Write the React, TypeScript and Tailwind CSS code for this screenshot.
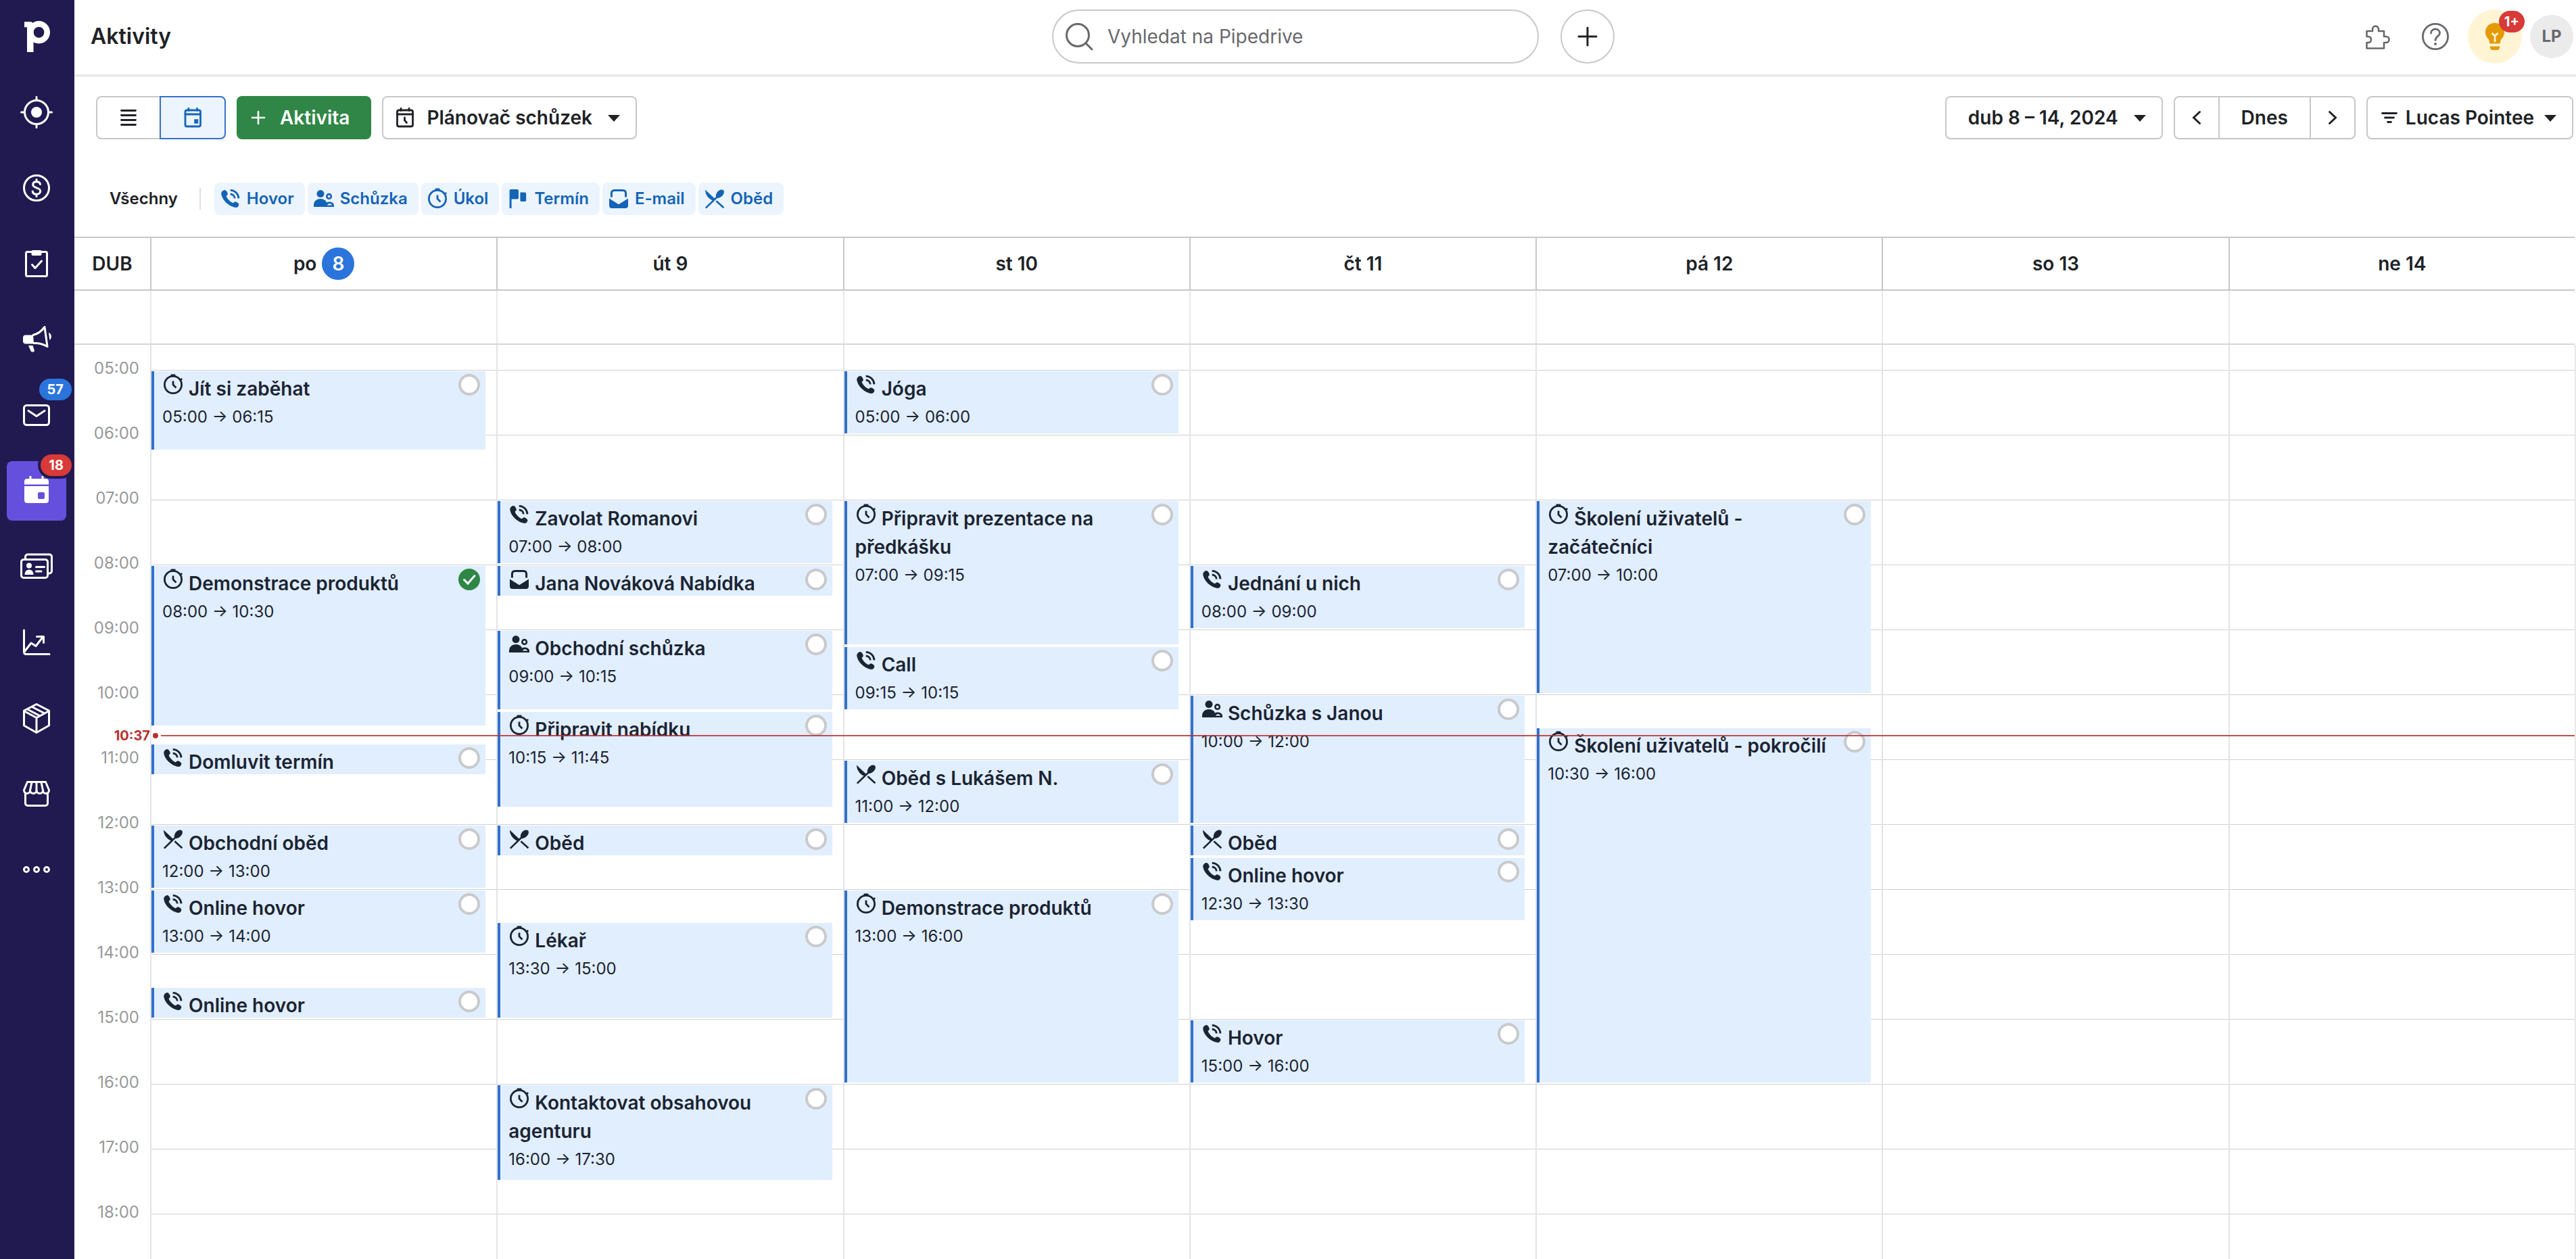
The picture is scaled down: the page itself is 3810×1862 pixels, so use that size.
import React from "react";

type ActivityType = "call" | "meeting" | "task" | "deadline" | "email" | "lunch";

interface Activity {
  type: ActivityType;
  title: string;
  start: string;
  end: string;
  done?: boolean;
}

interface Day {
  name: string;
  date: number;
  today?: boolean;
  activities: Activity[];
}

const FIRST_HOUR = 5;
const HOUR_HEIGHT = 96;
const GRID_TOP = 37;
const NOW = "10:37";

const hours = Array.from({ length: 14 }, (_, i) => FIRST_HOUR + i);

const days: Day[] = [
  {
    name: "po",
    date: 8,
    today: true,
    activities: [
      { type: "task", title: "Jít si zaběhat", start: "05:00", end: "06:15" },
      { type: "task", title: "Demonstrace produktů", start: "08:00", end: "10:30", done: true },
      { type: "call", title: "Domluvit termín", start: "10:45", end: "11:15" },
      { type: "lunch", title: "Obchodní oběd", start: "12:00", end: "13:00" },
      { type: "call", title: "Online hovor", start: "13:00", end: "14:00" },
      { type: "call", title: "Online hovor", start: "14:30", end: "15:00" },
    ],
  },
  {
    name: "út",
    date: 9,
    activities: [
      { type: "call", title: "Zavolat Romanovi", start: "07:00", end: "08:00" },
      { type: "email", title: "Jana Nováková Nabídka", start: "08:00", end: "08:30" },
      { type: "meeting", title: "Obchodní schůzka", start: "09:00", end: "10:15" },
      { type: "task", title: "Připravit nabídku", start: "10:15", end: "11:45" },
      { type: "lunch", title: "Oběd", start: "12:00", end: "12:30" },
      { type: "task", title: "Lékař", start: "13:30", end: "15:00" },
      { type: "task", title: "Kontaktovat obsahovou agenturu", start: "16:00", end: "17:30" },
    ],
  },
  {
    name: "st",
    date: 10,
    activities: [
      { type: "call", title: "Jóga", start: "05:00", end: "06:00" },
      { type: "task", title: "Připravit prezentace na předkášku", start: "07:00", end: "09:15" },
      { type: "call", title: "Call", start: "09:15", end: "10:15" },
      { type: "lunch", title: "Oběd s Lukášem N.", start: "11:00", end: "12:00" },
      { type: "task", title: "Demonstrace produktů", start: "13:00", end: "16:00" },
    ],
  },
  {
    name: "čt",
    date: 11,
    activities: [
      { type: "call", title: "Jednání u nich", start: "08:00", end: "09:00" },
      { type: "meeting", title: "Schůzka s Janou", start: "10:00", end: "12:00" },
      { type: "lunch", title: "Oběd", start: "12:00", end: "12:30" },
      { type: "call", title: "Online hovor", start: "12:30", end: "13:30" },
      { type: "call", title: "Hovor", start: "15:00", end: "16:00" },
    ],
  },
  {
    name: "pá",
    date: 12,
    activities: [
      { type: "task", title: "Školení uživatelů - začátečníci", start: "07:00", end: "10:00" },
      { type: "task", title: "Školení uživatelů - pokročilí", start: "10:30", end: "16:00" },
    ],
  },
  { name: "so", date: 13, activities: [] },
  { name: "ne", date: 14, activities: [] },
];

const filters: { type: ActivityType; label: string }[] = [
  { type: "call", label: "Hovor" },
  { type: "meeting", label: "Schůzka" },
  { type: "task", label: "Úkol" },
  { type: "deadline", label: "Termín" },
  { type: "email", label: "E-mail" },
  { type: "lunch", label: "Oběd" },
];

const minutesFromStart = (time: string) => {
  const [h, m] = time.split(":").map(Number);
  return (h - FIRST_HOUR) * 60 + m;
};

const activityShapes: Record<ActivityType, React.ReactNode> = {
  call: (
    <>
      <path
        fill="currentColor"
        d="M2.2 8C2.6 5.6 5 3 7.4 3c2 .2 3.8 3 4.4 5.4.2 1.5-1.4 2.4-2.2 3.6 1.4 4 5.9 8.7 10.2 10.3 1.1-.9 2-2.3 3.6-2.1 2.6.8 4.8 2.4 5 4.2-.2 2-1.8 4.2-3.8 4.6C14 28 3 18 2.2 8Z"
      />
      <path d="M15.7 3.4c6.4-.2 12 5.4 12.3 12M15.7 9c3.8.2 6.4 2.8 6.6 6.4" fill="none" stroke="currentColor" strokeWidth="2.8" />
    </>
  ),
  meeting: (
    <>
      <circle cx="11" cy="8.6" r="5.5" fill="currentColor" />
      <path d="M1 28v-2.5C1 20 5 16 11 16c4 0 7 1.6 8.6 4.6l-1.2 7.4H1Z" fill="currentColor" />
      <circle cx="23.6" cy="12.4" r="3.3" fill="none" stroke="currentColor" strokeWidth="2.6" />
      <path d="M17 28h14v-2c0-3.4-3.2-5.4-7-5.4-2.4 0-4 .6-5.4 1.4Z" fill="currentColor" />
      <path d="M21 25.600c.4-1.400 1.600-2.400 3.200-2.400 1.800 0 3.400.8 3.800 2.400Z" fill="#f0f6ff" />
    </>
  ),
  task: (
    <>
      <circle cx="16" cy="16" r="12.6" fill="none" stroke="currentColor" strokeWidth="2.8" />
      <rect x="12.5" y="0.4" width="7" height="3.6" rx="1" fill="currentColor" />
      <path d="M26 9.600l3.200-2.600M16 10.500v5.500l4.500 4.500" fill="none" stroke="currentColor" strokeWidth="2.8" />
    </>
  ),
  deadline: (
    <path
      fill="currentColor"
      d="M3.600 4c0-1.200.8-2 2-2H15c1.200 0 2 .8 2 2v10.500c0 1.200-.8 2-2 2H6.600V30h-3V4ZM19.400 6.500H26c1.300 0 2.200.9 2.200 2.200v9.200c0 1.300-.9 2.200-2.200 2.200h-4.400c-1.300 0-2.200-.9-2.200-2.200V6.500Z"
    />
  ),
  email: (
    <>
      <path d="M5.400 13.500V8c0-3 1.600-4.500 4.400-4.500h12.400c2.800 0 4.400 1.500 4.400 4.500v5.500" fill="none" stroke="currentColor" strokeWidth="3" />
      <path d="M2 15.500l14 8.700 14-8.700V26c0 2.600-1.400 4-4 4H6c-2.600 0-4-1.400-4-4V15.500Z" fill="currentColor" />
    </>
  ),
  lunch: (
    <>
      <path d="M2 2.600l14 13.200-2.800 2.800C7.500 16.500 2 10.500 2 2.600Z" fill="currentColor" />
      <path d="M2.800 29.600L21 12M18.400 19.200l11 10" stroke="currentColor" strokeWidth="2.6" fill="none" />
      <path d="M18.600 14.500c-2.600-3.500 1.600-12 7.600-12 3 0 4.200 1.800 3.600 4.600-1 5-7.600 9.600-11.200 7.400Z" fill="currentColor" />
    </>
  ),
};

const ActivityIcon: React.FC<{ type: ActivityType; className?: string }> = ({ type, className }) => (
  <svg viewBox="0 0 32 32" className={className} aria-hidden="true">
    {activityShapes[type]}
  </svg>
);

const Caret: React.FC = () => (
  <svg viewBox="0 0 32 32" className="size-8" aria-hidden="true">
    <path d="M7 12h18l-9 10z" fill="currentColor" />
  </svg>
);

interface NavItem {
  label: string;
  icon: React.ReactNode;
  badge?: string;
  active?: boolean;
}

const navItems: NavItem[] = [
  {
    label: "Leady",
    icon: (
      <>
        <circle cx="24" cy="24" r="17.5" />
        <circle cx="24" cy="24" r="8" fill="currentColor" stroke="none" />
        <path d="M24 1.500v5M24 41.500v5M1.500 24h5M41.500 24h5" />
      </>
    ),
  },
  {
    label: "Obchody",
    icon: (
      <>
        <circle cx="24" cy="24" r="18.5" />
        <path d="M29.500 18.500c-.4-2.400-2.600-3.800-5.500-3.800-3 0-5.300 1.500-5.300 4.300 0 6 11 3.600 11 9.700 0 3-2.500 4.600-5.700 4.600-3.200 0-5.500-1.600-5.800-4.300M24 11.500v3M24 33.500v3" />
      </>
    ),
  },
  {
    label: "Projekty",
    icon: (
      <>
        <rect x="8.5" y="6.5" width="31" height="36" rx="2" />
        <rect x="16.5" y="4" width="15" height="8" rx="2" fill="currentColor" stroke="none" />
        <path d="M17.500 25.500l4.500 5 9.500-10.500" />
      </>
    ),
  },
  {
    label: "Kampaně",
    icon: (
      <>
        <path d="M19 17.500C26 16 32 11 36 5.500l4 29C34 31 27 29 20 29.500" />
        <path d="M8 17.500h11l1 13H8c-2.600 0-4-1.600-4-4v-5c0-2.400 1.400-4 4-4ZM12 33h6.500l2.500 8c-1 2-4.500 2-5.500 0ZM42 14c5 1 5 9.500 1.400 10.700Z" fill="currentColor" stroke="none" />
      </>
    ),
  },
  {
    label: "Pošta",
    badge: "57",
    icon: (
      <>
        <rect x="5.5" y="9.5" width="37" height="29" rx="4" />
        <path d="M12 17.500l12 8 12-8" />
      </>
    ),
  },
  {
    label: "Aktivity",
    badge: "18",
    active: true,
    icon: (
      <path
        fill="currentColor"
        stroke="none"
        fillRule="evenodd"
        d="M13.500 2h3v4h15V2h3v4H38c2.500 0 4 1.500 4 4v4.500H6V10c0-2.500 1.500-4 4-4h3.500V2ZM6 17h36v21c0 2.500-1.500 4-4 4H10c-2.500 0-4-1.500-4-4V17Zm22 9c-1.200 0-2 .8-2 2v6c0 1.200.8 2 2 2h6c1.200 0 2-.8 2-2v-6c0-1.200-.8-2-2-2h-6Z"
      />
    ),
  },
  {
    label: "Kontakty",
    icon: (
      <>
        <path d="M7.500 12V9.500c0-2 1.500-3.500 3.500-3.500h32c2 0 3.500 1.500 3.500 3.500v21c0 2-1.500 3.500-3.500 3.500h-1" />
        <rect x="1.5" y="13.5" width="39" height="27" rx="3.5" />
        <circle cx="13" cy="22.5" r="4" fill="currentColor" stroke="none" />
        <path d="M6.500 36c0-4.500 2.500-7.500 6.500-7.500s6.500 3 6.500 7.500Z" fill="currentColor" stroke="none" />
        <path d="M23.500 24.500h12M23.500 31h7.500" />
      </>
    ),
  },
  {
    label: "Přehledy",
    icon: <path d="M5.500 6v32c0 2 1 3.500 3 3.500h34.500M6 38l10-13 7 4.500L33.500 16M24.500 15.500h10v9" />,
  },
  {
    label: "Produkty",
    icon: <path d="M24 3.500l18.500 9.500v22L24 45.500 5.500 35V13L24 3.500ZM5.500 13.500L24 23.500l18.500-10M24 23.500V45M10.500 11l18 9.500M17.500 7.500l18.500 9.500" />,
  },
  {
    label: "Marketplace",
    icon: (
      <>
        <path d="M10.500 6.500h27l5 12c0 3-2 5-4.500 5s-4.500-2-4.500-4.500c0 2.500-2 4.500-4.700 4.500S24 21.500 24 19c0 2.500-2 4.500-4.700 4.500s-4.800-2-4.800-4.500c0 2.500-2 4.500-4.500 4.500s-4.500-2-4.500-5l5-12Z" />
        <path d="M17 7l-2.500 12M24 7v12M31 7l2.500 12M7.500 24v14c0 2 1.500 3.500 3.500 3.500h26c2 0 3.500-1.500 3.500-3.500V24" />
      </>
    ),
  },
  {
    label: "Více",
    icon: (
      <>
        <circle cx="9" cy="24" r="3.5" />
        <circle cx="24" cy="24" r="3.5" />
        <circle cx="39" cy="24" r="3.5" />
      </>
    ),
  },
];

const Sidebar: React.FC = () => (
  <aside className="flex w-[110px] shrink-0 flex-col bg-[#211a50] pl-2.5 text-white">
    <a href="#home" aria-label="Pipedrive" className="mb-[14px] flex h-[108px] w-[88px] items-center justify-center">
      <svg viewBox="0 0 48 48" className="size-12" aria-hidden="true">
        <ellipse cx="27.5" cy="17.8" rx="12.2" ry="12.4" fill="none" stroke="currentColor" strokeWidth="8.6" />
        <path d="M6 2.300h10.500l3 3V47H10V10.300H6Z" fill="currentColor" />
      </svg>
    </a>
    <nav className="flex flex-col gap-6">
      {navItems.map((item) => (
        <a
          key={item.label}
          href="#"
          aria-label={item.label}
          className={`relative flex size-[88px] items-center justify-center rounded-lg ${item.active ? "bg-[#6450dd]" : ""}`}
        >
          <svg
            viewBox="0 0 48 48"
            className="size-12"
            fill="none"
            stroke="currentColor"
            strokeWidth="3"
            strokeLinecap="round"
            strokeLinejoin="round"
            aria-hidden="true"
          >
            {item.icon}
          </svg>
          {item.badge && (
            <span
              className={`absolute -top-2.5 -right-2 h-8 rounded-full px-3 text-xl leading-8 font-bold ring-4 ring-[#211a50] ${
                item.active ? "bg-[#d83a37]" : "bg-[#2a74db]"
              }`}
            >
              {item.badge}
            </span>
          )}
        </a>
      ))}
    </nav>
  </aside>
);

const Header: React.FC = () => (
  <header className="grid grid-cols-[1fr_auto_1fr] items-center border-b-2 border-[#e8e8e9] pt-3.5 pb-4 pl-6 shadow-sm">
    <h1 className="text-[32px] leading-10 font-semibold">Aktivity</h1>
    <div className="flex items-center gap-8">
      <label className="flex h-20 w-[720px] items-center gap-5 rounded-full border-2 border-[#c8c8c9] px-4 text-[#68696c]">
        <svg viewBox="0 0 44 44" className="size-11" fill="none" stroke="currentColor" strokeWidth="3" strokeLinecap="round" aria-hidden="true">
          <circle cx="20" cy="20" r="16.5" />
          <path d="M32 32l9 9" />
        </svg>
        <input
          type="search"
          aria-label="Vyhledat"
          placeholder="Vyhledat na Pipedrive"
          className="flex-1 bg-transparent text-[28px] leading-10 outline-none placeholder:text-[#68696c]"
        />
      </label>
      <button type="button" aria-label="Přidat" className="flex size-20 items-center justify-center rounded-full border-2 border-[#c8c8c9]">
        <svg viewBox="0 0 32 32" className="size-8" stroke="currentColor" strokeWidth="3" strokeLinecap="round" aria-hidden="true">
          <path d="M16 3v26M3 16h26" />
        </svg>
      </button>
    </div>
    <div className="mr-1 flex items-center justify-end gap-3 text-[#68696c]">
      <button type="button" aria-label="Doplňky" className="mr-7 flex size-11 items-center justify-center">
        <svg viewBox="0 0 44 44" className="size-11" fill="none" stroke="currentColor" strokeWidth="2.6" strokeLinejoin="round" aria-hidden="true">
          <path d="M4.500 14h8.500v-2.500c0-6.500 9-6.500 9 0V14h8v8h3c6 0 6 9 0 9h-3v8.500H4.500V31h2c6 0 6-9 0-9h-2V14Z" />
        </svg>
      </button>
      <button type="button" aria-label="Nápověda" className="mr-3.5 flex size-11 items-center justify-center">
        <svg viewBox="0 0 44 44" className="size-11" fill="none" stroke="currentColor" strokeWidth="2.8" strokeLinecap="round" aria-hidden="true">
          <circle cx="22" cy="22" r="18.6" />
          <path d="M15.500 17c0-3.500 2.800-6 6.500-6s6.500 2.500 6.500 6c0 4.500-6.500 5-6.500 10.500" />
          <circle cx="22" cy="33" r="1.2" fill="currentColor" strokeWidth="1.6" />
        </svg>
      </button>
      <button type="button" aria-label="Tipy" className="relative flex size-20 items-center justify-center rounded-full bg-[#fff5d4]">
        <svg viewBox="0 0 40 40" className="size-10" aria-hidden="true">
          <path d="M20 0c8.500 0 14 6 14 13.500 0 5-2 7.500-4.500 10.500-1.300 1.600-1.500 4-2 6.500h-15c-.5-2.500-.7-4.900-2-6.500C8 21 6 18.500 6 13.500 6 6 11.500 0 20 0Z" fill="#e59a05" />
          <path d="M12.500 34.500h15l-1 3.500c-.4 1.200-1 2-2.500 2h-8c-1.500 0-2.100-.8-2.500-2l-1-3.500Z" fill="#e59a05" />
          <path d="M20 28v-9l-4.500-4M20 19l4.500-4" stroke="#fff5d4" strokeWidth="2.8" fill="none" />
        </svg>
        <span className="absolute top-0.5 -right-1 h-8 rounded-full bg-[#d83a37] px-2 text-xl leading-8 font-bold text-white">1+</span>
      </button>
      <button type="button" className="size-16 rounded-full bg-[#ebebec] text-2xl font-bold">
        LP
      </button>
    </div>
  </header>
);

const Toolbar: React.FC = () => (
  <div className="flex items-center gap-4 pt-[30px] pr-1 pl-8 text-[28px] font-semibold">
    <div className="flex h-16">
      <button type="button" aria-label="Seznam" className="flex w-[94px] items-center justify-center rounded-l-lg border-2 border-r-0 border-[#c8c8c9]">
        <svg viewBox="0 0 32 32" className="size-8" stroke="currentColor" strokeWidth="2.8" strokeLinecap="round" aria-hidden="true">
          <path d="M5.500 5.500h21M5.500 12.500h21M5.500 19.500h21M5.500 26.500h21" />
        </svg>
      </button>
      <button type="button" aria-label="Kalendář" className="flex w-[98px] items-center justify-center rounded-r-lg border-2 border-[#3371c9] bg-[#ecf4fe] text-[#1565b8]">
        <svg viewBox="0 0 32 32" className="size-8" fill="none" stroke="currentColor" strokeWidth="2.8" strokeLinecap="round" aria-hidden="true">
          <rect x="5" y="5" width="22.5" height="24" rx="2.5" />
          <path d="M5 11h22.500M10 2.500v3M22.500 2.500v3" />
          <rect x="19" y="19" width="4.5" height="5" fill="currentColor" strokeWidth="1.5" />
        </svg>
      </button>
    </div>
    <button type="button" className="flex h-16 items-center gap-4 rounded-lg bg-[#2f8646] pr-8 pl-4 text-white">
      <svg viewBox="0 0 32 32" className="size-8" stroke="currentColor" strokeWidth="2.6" strokeLinecap="round" aria-hidden="true">
        <path d="M16 7v18M7 16h18" />
      </svg>
      Aktivita
    </button>
    <button type="button" aria-haspopup="menu" className="flex h-16 items-center gap-4 rounded-lg border-2 border-[#c8c8c9] px-4 shadow-xs">
      <svg viewBox="0 0 32 32" className="size-8" fill="none" stroke="currentColor" strokeWidth="2.8" strokeLinecap="round" aria-hidden="true">
        <rect x="4.5" y="5" width="23" height="24" rx="2.5" />
        <path d="M4.500 11h23M10 2.500v3M22 2.500v3M15.500 16v4l3 3.500" />
      </svg>
      Plánovač schůzek
      <Caret />
    </button>
    <button type="button" aria-haspopup="menu" className="ml-auto flex h-16 items-center gap-4 rounded-lg border-2 border-[#c8c8c9] pr-4 pl-8 shadow-xs">
      dub 8 – 14, 2024
      <Caret />
    </button>
    <div className="flex h-16 divide-x-2 divide-[#c8c8c9] rounded-lg border-2 border-[#c8c8c9] shadow-xs">
      <button type="button" aria-label="Předchozí týden" className="flex w-[66px] items-center justify-center">
        <svg viewBox="0 0 32 32" className="size-8" fill="none" stroke="currentColor" strokeWidth="3" strokeLinecap="round" aria-hidden="true">
          <path d="M20.500 7.500l-9 8.500 9 8.500" />
        </svg>
      </button>
      <button type="button" className="px-8">Dnes</button>
      <button type="button" aria-label="Další týden" className="flex w-16 items-center justify-center">
        <svg viewBox="0 0 32 32" className="size-8" fill="none" stroke="currentColor" strokeWidth="3" strokeLinecap="round" aria-hidden="true">
          <path d="M11.500 7.500l9 8.500-9 8.500" />
        </svg>
      </button>
    </div>
    <button type="button" aria-haspopup="menu" className="flex h-16 items-center gap-2 rounded-lg border-2 border-[#c8c8c9] px-4 shadow-xs">
      <svg viewBox="0 0 32 32" className="size-8" stroke="currentColor" strokeWidth="2.8" strokeLinecap="round" aria-hidden="true">
        <path d="M5.500 9.500h21M9.500 16h13M13.500 22.500h5" />
      </svg>
      Lucas Pointee
      <Caret />
    </button>
  </div>
);

const TypeFilters: React.FC = () => (
  <div className="flex h-28 items-end text-2xl leading-8 font-semibold">
    <div className="flex items-center">
      <button type="button" className="h-12 pr-8 pl-[52px]">Všechny</button>
      <span className="mr-5 h-8 w-0.5 bg-[#e0e0e1]" />
      <div className="flex gap-1">
        {filters.map((filter) => (
          <button
            key={filter.type}
            type="button"
            className="flex h-12 items-center gap-2 rounded-lg bg-[#ecf4fe] pr-4 pl-2 text-[#1464b6]"
          >
            <ActivityIcon type={filter.type} className="size-8" />
            {filter.label}
          </button>
        ))}
      </div>
    </div>
  </div>
);

const ActivityCard: React.FC<{ activity: Activity }> = ({ activity }) => {
  const start = minutesFromStart(activity.start) / 15;
  const span = minutesFromStart(activity.end) / 15 - start;

  return (
    <article
      className="col-start-1 my-0.5 mr-4 flex overflow-hidden border-l-4 border-[#3172cc] bg-[#e1eefe] pt-1 pr-2 pl-3 text-[#1b2433]"
      style={{ gridRow: `${start + 1} / span ${span}` }}
    >
      <div className="flex-1 pr-4">
        <h3 className="text-[28px] leading-[42px] font-semibold">
          <ActivityIcon type={activity.type} className="inline size-8 align-baseline" /> {activity.title}
        </h3>
        {span > 2 && (
          <p className="text-2xl leading-[42px]">
            {activity.start} → {activity.end}
          </p>
        )}
      </div>
      <span className="relative size-8 shrink-0">
        <input
          type="checkbox"
          defaultChecked={activity.done}
          aria-label={`Hotovo: ${activity.title}`}
          className="block size-8 appearance-none rounded-full border-4 border-[#c9cacc] bg-white checked:border-[#2f8646] checked:bg-[#2f8646]"
        />
        {activity.done && (
          <svg viewBox="0 0 32 32" className="pointer-events-none absolute inset-0 size-8 text-white" aria-hidden="true">
            <path d="M8.500 16.500l5.500 5.500L24 10.500" fill="none" stroke="currentColor" strokeWidth="3" strokeLinecap="round" />
          </svg>
        )}
      </span>
    </article>
  );
};

const WeekCalendar: React.FC = () => (
  <section className="flex min-h-0 flex-1 flex-col pt-8">
    <div className="mr-0.5 grid h-20 shrink-0 grid-cols-[112px_repeat(7,1fr)] border-y-2 border-[#c8c8c9] text-[28px] font-semibold">
      <div className="flex items-center justify-center">DUB</div>
      {days.map((day) => (
        <div key={day.date} className="flex items-center justify-center gap-2 border-l-2 border-[#c8c8c9]">
          {day.today ? (
            <>
              {day.name}
              <span className="size-12 rounded-full bg-[#2a74db] text-center leading-[48px] text-white">{day.date}</span>
            </>
          ) : (
            `${day.name} ${day.date}`
          )}
        </div>
      ))}
    </div>
    <div className="mr-0.5 grid h-20 shrink-0 grid-cols-[112px_repeat(7,1fr)] border-b-2 border-[#d6d6d7]">
      <div />
      {days.map((day) => (
        <div key={day.date} className="border-l-2 border-[#e9e9ea]" />
      ))}
    </div>
    <div className="min-h-0 flex-1 overflow-hidden">
      <div className="relative grid grid-cols-[112px_repeat(7,1fr)] border-r-2 border-[#e9e9ea]">
        <div className="pt-[23px] pr-4 text-right text-2xl text-[#98999b]">
          {hours.map((hour) => (
            <div key={hour} className="h-24 leading-6">
              {String(hour).padStart(2, "0")}:00
            </div>
          ))}
        </div>
        {days.map((day) => (
          <div key={day.date} className="grid auto-rows-[24px] content-start border-l-2 border-[#e4e4e5] pt-[37px]">
            {hours.map((hour, i) => (
              <div
                key={hour}
                className="col-start-1 border-t border-[#d0d1d2]"
                style={{ gridRow: `${i * 4 + 1} / span 4` }}
              />
            ))}
            {day.activities.map((activity) => (
              <ActivityCard key={activity.start} activity={activity} />
            ))}
          </div>
        ))}
        <div
          className="pointer-events-none absolute inset-x-0 flex h-0.5 items-center text-[#b93030]"
          style={{ top: GRID_TOP + Math.ceil((minutesFromStart(NOW) * HOUR_HEIGHT) / 60) }}
        >
          <span className="w-28 text-right text-xl font-bold">{NOW}</span>
          <span className="mx-1 size-2 rounded-full bg-[#b93030]" />
          <span className="h-0.5 flex-1 bg-[#b93030]/85" />
        </div>
      </div>
    </div>
  </section>
);

const App: React.FC = () => (
  <div className="flex h-screen overflow-hidden bg-white font-[Inter,sans-serif] text-[#202226]">
    <Sidebar />
    <main className="flex min-w-0 flex-1 flex-col">
      <Header />
      <Toolbar />
      <TypeFilters />
      <WeekCalendar />
    </main>
  </div>
);

export default App;
